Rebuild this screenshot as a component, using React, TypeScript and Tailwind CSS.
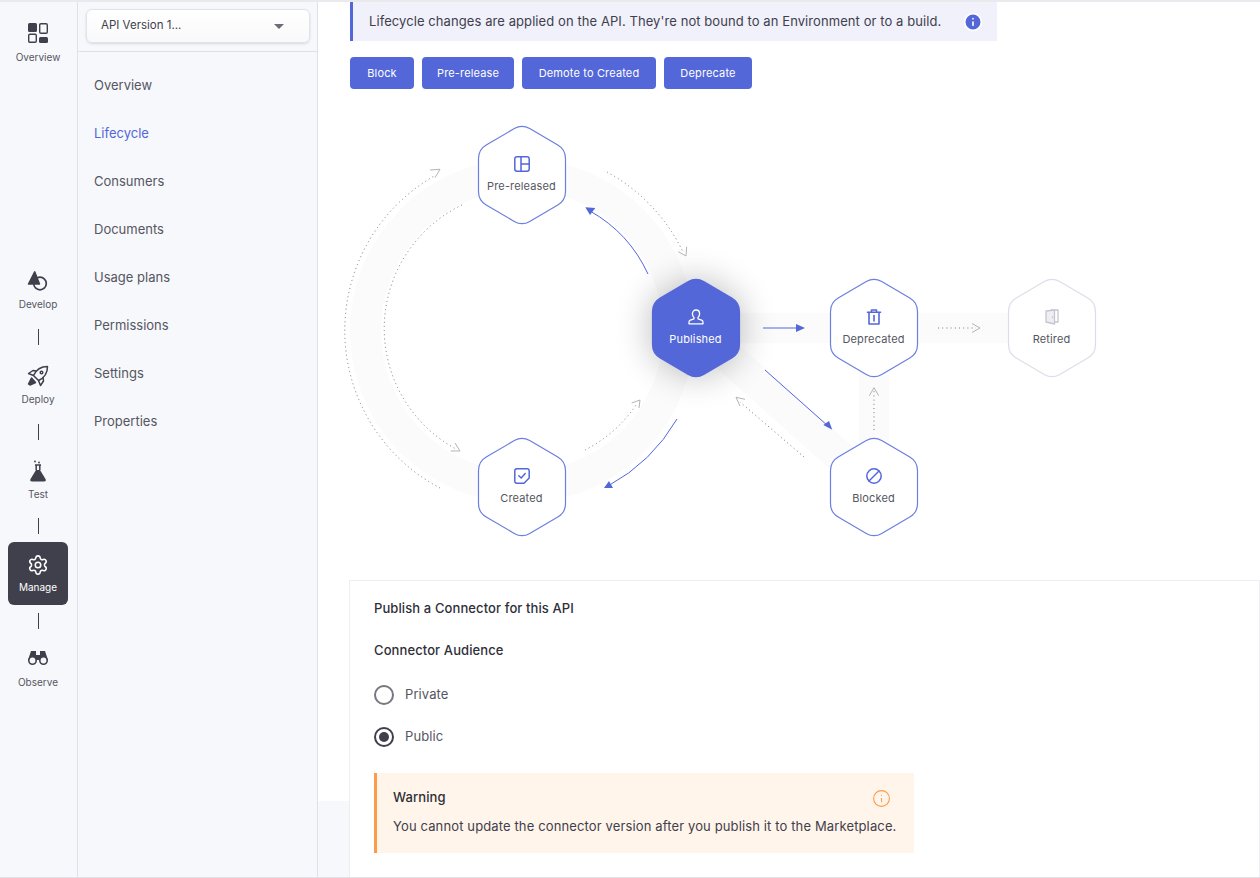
import React from 'react';
import { Info, Settings } from 'lucide-react';

const font = { fontFamily: '"Inter", "Liberation Sans", sans-serif' };

const rail = 'text-[#3f404c]';

const OverviewIcon = () => (
  <svg width="20" height="20" viewBox="0 0 20 20" className={rail}>
    <rect x="0" y="0" width="9" height="9" rx="1.5" fill="currentColor" />
    <rect x="11.7" y="0.7" width="7.6" height="9.6" rx="1.2" fill="none" stroke="currentColor" strokeWidth="1.4" />
    <rect x="0.7" y="11.3" width="7.6" height="8" rx="1.2" fill="none" stroke="currentColor" strokeWidth="1.4" />
    <rect x="11" y="14" width="9" height="6" rx="1.5" fill="currentColor" />
  </svg>
);

const DevelopIcon = () => (
  <svg width="22" height="22" viewBox="0 0 22 22" className={rail}>
    <circle cx="13" cy="13.5" r="6.3" fill="#f7f8fc" stroke="currentColor" strokeWidth="1.7" />
    <path d="M7.7 1.8 L12.5 14 L1.5 14 Z" fill="currentColor" stroke="currentColor" strokeWidth="1.5" strokeLinejoin="round" />
  </svg>
);

const DeployIcon = () => (
  <svg width="22" height="22" viewBox="0 0 22 22" fill="none" stroke="currentColor" strokeWidth="1.5" strokeLinejoin="round" className={rail}>
    <path d="M20.5 1.5 C14 1.5 9 5 6.5 10.5 L11.5 15.5 C17 13 20.5 8 20.5 1.5 Z" />
    <path d="M6.5 10.5 L1.5 8.5 L6 5.5 L9.5 6" />
    <path d="M11.5 15.5 L13.5 20.5 L16.5 16 L16 12.5" />
    <path d="M4.5 13 L8.5 17.5 L3 20 L1.5 19 Z" fill="currentColor" />
    <circle cx="14.5" cy="7.5" r="1.3" />
  </svg>
);

const TestIcon = () => (
  <svg width="20" height="22" viewBox="0 0 20 22" className={rail}>
    <path d="M7 5 H13 M8.2 5 V10 M11.8 5 V10" fill="none" stroke="currentColor" strokeWidth="1.5" />
    <path d="M8 10 H12 L17.5 19 Q18.5 21.5 16 21.5 H4 Q1.5 21.5 2.5 19 Z" fill="currentColor" />
    <circle cx="7" cy="1.5" r="0.9" fill="currentColor" />
    <circle cx="11" cy="2.5" r="0.9" fill="currentColor" />
  </svg>
);

const ObserveIcon = () => (
  <svg width="20" height="16" viewBox="0 0 20 16" className={rail}>
    <path d="M3 1 H8 V5 H12 V1 H17 L20 10 H0 Z" fill="currentColor" />
    <circle cx="4.5" cy="10.5" r="3.7" fill="#f7f8fc" stroke="currentColor" strokeWidth="1.6" />
    <circle cx="15.5" cy="10.5" r="3.7" fill="#f7f8fc" stroke="currentColor" strokeWidth="1.6" />
  </svg>
);

const railItems = [
  { label: 'Develop', icon: <DevelopIcon />, line: 'mt-[9px] mb-[10px]' },
  { label: 'Deploy', icon: <DeployIcon />, line: 'mt-[9px] mb-[10px]' },
  { label: 'Test', icon: <TestIcon />, line: 'mt-2 mb-2' },
];

const Connector = () => <div className="w-px h-4 bg-[#3f404c]" />;

const Rail = () => (
  <aside className="w-[78px] shrink-0 border-r border-[#dfe1e8] bg-[#f7f8fc] flex flex-col items-center pr-px">
    <div className="flex flex-col items-center h-[62px] pt-[21px]">
      <OverviewIcon />
      <span className="mt-2 text-[10px] leading-3 text-[#55565f]">Overview</span>
    </div>
    <div className="h-[196px]" />
    {railItems.map((item) => (
      <React.Fragment key={item.label}>
        <div className="flex flex-col items-center h-[60px] w-[60px] justify-center gap-[6px]">
          <div className="h-[22px] flex items-center">{item.icon}</div>
          <span className="text-[10px] leading-3 text-[#55565f]">{item.label}</span>
        </div>
        <div className={item.line}><Connector /></div>
      </React.Fragment>
    ))}
    <div className="flex flex-col items-center h-[63px] w-[60px] justify-center gap-[5px] rounded-md bg-[#3f404c]">
      <Settings size={22} className="text-white" strokeWidth={1.7} />
      <span className="text-[10px] leading-3 text-white">Manage</span>
    </div>
    <div className="mt-2 mb-[10px]"><Connector /></div>
    <div className="flex flex-col items-center h-[60px] w-[60px] justify-center gap-[10px]">
      <ObserveIcon />
      <span className="text-[10px] leading-3 text-[#55565f]">Observe</span>
    </div>
  </aside>
);

const navItems = ['Overview', 'Lifecycle', 'Consumers', 'Documents', 'Usage plans', 'Permissions', 'Settings', 'Properties'];

const SubNav = () => (
  <nav className="w-[240px] shrink-0 border-r border-[#dfe1e8] bg-[#f7f8fc]">
    <div className="h-[50px] border-b border-[#dfe1e8] pl-[8px] pr-[7px] pt-[7px]">
      <div className="h-[34px] rounded-md border border-[#e1e3ea] bg-gradient-to-b from-white to-[#f9f9fb] flex items-center justify-between pl-[14px] pr-[25px] shadow-sm">
        <span className="text-[11.5px] text-[#3f404c]">API Version 1...</span>
        <span className="w-0 h-0 border-x-[5px] border-x-transparent border-t-[5px] border-t-[#6b6c75]" />
      </div>
    </div>
    <ul className="pt-[10px]">
      {navItems.map((item) => (
        <li key={item} className={`h-12 flex items-center pl-[16px] text-[13px] ${item === 'Lifecycle' ? 'text-[#5367d8]' : 'text-[#55565f]'}`}>
          {item}
        </li>
      ))}
    </ul>
  </nav>
);

const hexPath = 'M -7.7 -46.4 Q 0 -51 7.7 -46.4 L 35.8 -30 Q 43.5 -25.5 43.5 -16.5 L 43.5 16.5 Q 43.5 25.5 35.8 30 L 7.7 46.4 Q 0 51 -7.7 46.4 L -35.8 30 Q -43.5 25.5 -43.5 16.5 L -43.5 -16.5 Q -43.5 -25.5 -35.8 -30 Z';

const blue = '#5367d8';
const grey = '#a9aab3';

const Hex = ({ x, y, label, children, variant }: { x: number; y: number; label: string; children: React.ReactNode; variant?: 'solid' | 'off' }) => (
  <g transform={`translate(${x} ${y})`}>
    <path
      d={hexPath}
      fill={variant === 'solid' ? blue : 'white'}
      stroke={variant === 'solid' ? blue : variant === 'off' ? '#dcdde8' : '#6c7fe0'}
      strokeWidth="1.2"
    />
    <g transform="translate(-8 -19)" fill="none" strokeLinejoin="round" strokeLinecap="round">{children}</g>
    <text x="-0.5" y="15" textAnchor="middle" fontSize="11" letterSpacing="0.15" fill={variant === 'solid' ? 'white' : '#55565f'}>{label}</text>
  </g>
);

const Dotted = ({ d }: { d: string }) => (
  <path d={d} fill="none" stroke="#77787f" strokeWidth="1" strokeDasharray="1 3.2" />
);

const Diagram = () => (
  <svg width="780" height="460" viewBox="330 100 780 460" className="block mt-[11px] ml-[-20px]" style={font}>
    <defs>
      <filter id="glow" x="-100%" y="-100%" width="300%" height="300%">
        <feGaussianBlur stdDeviation="18" />
      </filter>
    </defs>

    {/* bands behind the nodes */}
    <g fill="none" stroke="#fbfbfb">
      <circle cx="522" cy="331" r="156.5" strokeWidth="31" />
      <path d="M696 328 H1050" strokeWidth="30" />
      <path d="M874 328 V487" strokeWidth="30" />
      <path d="M696 328 L874 487" strokeWidth="32" />
    </g>

    <path d={hexPath} transform="translate(696 328)" fill="#000" opacity="0.28" filter="url(#glow)" />

    {/* dotted transitions */}
    <Dotted d="M440 488 A178 178 0 0 1 436 175" />
    <Dotted d="M462 205 A137 137 0 0 0 456 449" />
    <Dotted d="M607 172 A180 180 0 0 1 683 252" />
    <Dotted d="M585 450 A136 136 0 0 0 636 405" />
    <Dotted d="M938 328 H976" />
    <Dotted d="M804 457 L740 402" />
    <Dotted d="M874 430 V390" />
    <g fill="none" stroke={grey} strokeWidth="0.9" strokeLinejoin="round">
      <path d="M430 170 L440 169.3 L435 177.7" />
      <path d="M678.3 251.7 L686 256 L686.7 246.7" />
      <path d="M455 443 L460 451 L450.7 451" />
      <path d="M631.7 403 L640 400 L639 408" />
      <path d="M972 323.5 L980 328 L972 332.5" />
      <path d="M745 399.3 L736 397.3 L740 406" />
      <path d="M869.3 395.7 L874 387.7 L878.7 395.7" />
    </g>

    {/* solid transitions */}
    <g fill="none" stroke={blue} strokeWidth="1">
      <path d="M648 274 A139 139 0 0 0 590 211" />
      <path d="M677 419 A178 178 0 0 1 608 486" />
      <path d="M763 328 H798" />
      <path d="M765 370 L828 426" />
    </g>
    <g fill={blue}>
      <path d="M585.3 207.3 L595.3 208 L590 215 Z" />
      <path d="M604 488 L613 488 L609 481 Z" />
      <path d="M796 324 L805 328 L796 332 Z" />
      <path d="M823.3 425 L832.3 429.7 L829 421 Z" />
    </g>

    <Hex x={522} y={175} label="Pre-released">
      <g stroke={blue} strokeWidth="1.5">
        <rect x="0.8" y="0.8" width="14.4" height="14.4" rx="2.2" />
        <path d="M7 1 V15 M7 8 H15" />
      </g>
    </Hex>
    <Hex x={696} y={328} label="Published" variant="solid">
      <path d="M8 1 C10.2 1 11.6 2.7 11.6 4.8 C11.6 6.5 10.8 7.8 10 8.4 V9.8 L13.6 11.2 C14.5 11.6 15 12.2 15 13.2 V14.8 H1 V13.2 C1 12.2 1.5 11.6 2.4 11.2 L6 9.8 V8.4 C5.2 7.8 4.4 6.5 4.4 4.8 C4.4 2.7 5.8 1 8 1 Z" stroke="white" strokeWidth="1.3" />
    </Hex>
    <Hex x={874} y={328} label="Deprecated">
      <g stroke={blue} strokeWidth="1.6">
        <path d="M1.5 3.2 H14.5 M5.5 3 V1 H10.5 V3" />
        <path d="M3 3.5 V15 H13 V3.5" />
        <path d="M8 6.5 V12" />
      </g>
    </Hex>
    <Hex x={1052} y={328} label="Retired" variant="off">
      <g stroke="#c4c5d2" strokeWidth="1.3">
        <path d="M7 1 H14 V13 H11" />
        <path d="M2 2 L10.5 1.2 V15 L2 13 Z" fill="#eeeef3" />
        <path d="M8.5 8 V8.6" />
      </g>
    </Hex>
    <Hex x={522} y={487} label="Created">
      <g stroke={blue} strokeWidth="1.5">
        <path d="M3 0.8 H13 Q15.2 0.8 15.2 3 V10 L10 15.2 H3 Q0.8 15.2 0.8 13 V3 Q0.8 0.8 3 0.8 Z" />
        <path d="M4.8 7.8 L7.2 10 L11.2 5.6" />
      </g>
    </Hex>
    <Hex x={874} y={487} label="Blocked">
      <g stroke={blue} strokeWidth="1.5">
        <circle cx="8" cy="8" r="7.2" />
        <path d="M3 13 L13 3" />
      </g>
    </Hex>
  </svg>
);

const buttons = [
  { label: 'Block', width: 'w-[64px]' },
  { label: 'Pre-release', width: 'w-[92px]' },
  { label: 'Demote to Created', width: 'w-[134px]' },
  { label: 'Deprecate', width: 'w-[88px]' },
];

const Radio = ({ label, checked }: { label: string; checked?: boolean }) => (
  <label className="flex items-center gap-[11px] h-5 text-[13px] text-[#55565f]">
    <span className={`w-5 h-5 rounded-full border-2 flex items-center justify-center ${checked ? 'border-[#3f404c]' : 'border-[#77787f]'}`}>
      {checked && <span className="w-[10px] h-[10px] rounded-full bg-[#3f404c]" />}
    </span>
    {label}
  </label>
);

const Main = () => (
  <main className="flex-1 relative min-w-0 bg-white">
    <div className="absolute left-0 right-0 bottom-0 top-[799px] bg-[#f7f8fc]" />
    <div className="relative pl-[32px]">
      <div className="w-[647px] h-[39px] border-l-[3px] border-[#5367d8] bg-[#f0f1fb] flex items-center justify-between pl-[16px] pr-[14px] text-[13px] tracking-[0.08px] text-[#3f404c]">
        <span>Lifecycle changes are applied on the API. They're not bound to an Environment or to a build.</span>
        <Info size={20} fill="#5367d8" color="white" />
      </div>
      <div className="flex gap-2 mt-4">
        {buttons.map((b) => (
          <button key={b.label} className={`h-8 rounded bg-[#5367d8] text-white text-[11px] tracking-[0.15px] ${b.width}`}>{b.label}</button>
        ))}
      </div>
      <Diagram />
      <section className="ml-[-1px] mt-[20px] h-[320px] border border-[#eeeef1] bg-white pl-6 pt-[20px] tracking-[0.1px]">
        <h2 className="text-[13px] font-medium text-[#2e2f38] leading-[15px]">Publish a Connector for this API</h2>
        <h3 className="mt-[27px] text-[13px] font-medium text-[#2e2f38] leading-[15px]">Connector Audience</h3>
        <div className="mt-[27px] flex flex-col gap-[22px]">
          <Radio label="Private" />
          <Radio label="Public" checked />
        </div>
        <div className="mt-[26px] w-[540px] h-[80px] border-l-[3px] border-[#fb9c4c] bg-[#fff5ea] pl-[16px] pr-[23px] pt-[15px]">
          <div className="flex items-center justify-between h-5">
            <span className="text-[13px] font-medium text-[#2e2f38]">Warning</span>
            <Info size={19} color="#fb9c4c" strokeWidth={1.4} />
          </div>
          <p className="mt-[9px] text-[13px] tracking-[0.13px] whitespace-nowrap text-[#3f404c]">You cannot update the connector version after you publish it to the Marketplace.</p>
        </div>
      </section>
    </div>
  </main>
);

export default function App() {
  return (
    <div className="w-[1260px] h-[878px] overflow-hidden flex border-t-2 border-[#e9e9ee] border-b border-b-[#e2e3e8]" style={font}>
      <Rail />
      <SubNav />
      <Main />
    </div>
  );
}
